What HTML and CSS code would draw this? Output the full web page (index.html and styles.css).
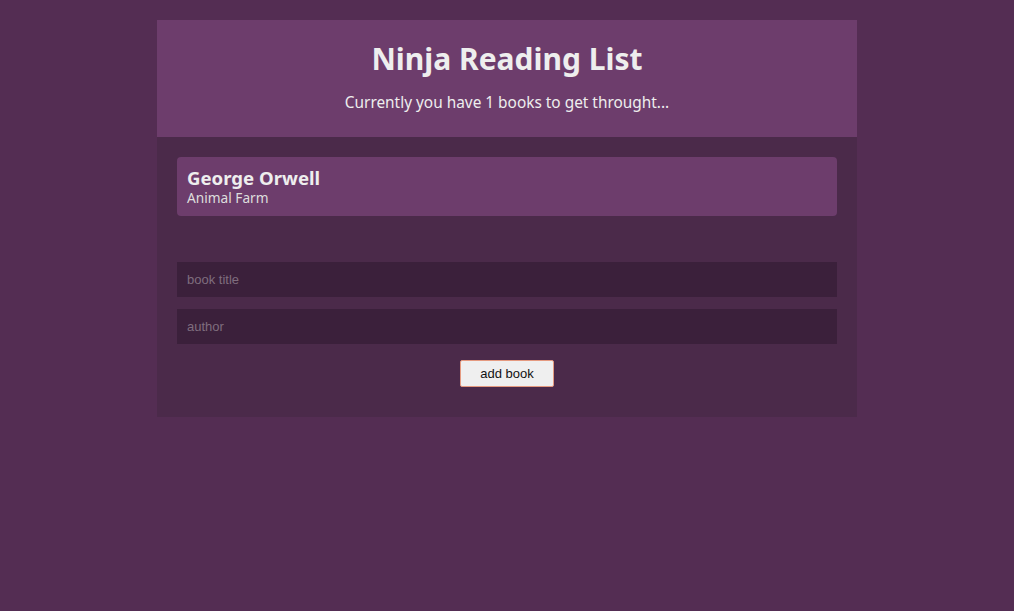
FILE: index.html
```html
<!DOCTYPE html>
<html>
<head>
<meta charset="utf-8">
<link rel="stylesheet" href="styles.css">
</head>
<body>
<div class="app">
  <header class="navbar">
    <h1>Ninja Reading List</h1>
    <p>Currently you have 1 books to get throught...</p>
  </header>
  <main class="content">
    <ul class="book-list">
      <li class="book">
        <div class="title">George Orwell</div>
        <div class="author">Animal Farm</div>
      </li>
    </ul>
    <form class="book-form">
      <input type="text" placeholder="book title">
      <input type="text" placeholder="author">
      <button type="button">add book</button>
    </form>
  </main>
</div>
</body>
</html>
```
FILE: styles.css
```css
html, body {
  margin: 0;
  padding: 0;
  background: #542d53;
}
body {
  font-family: "Noto Sans", "Open Sans", sans-serif;
  color: #eee;
}
.app {
  width: 700px;
  margin: 20px auto;
}
.navbar {
  background: #6d3d6c;
  height: 117px;
  box-sizing: border-box;
  padding-top: 20px;
  text-align: center;
}
.navbar h1 {
  margin: 0;
  font-size: 30px;
  line-height: 38px;
  font-weight: 700;
}
.navbar p {
  margin: 15px 0 0;
  font-size: 15.4px;
  line-height: 20px;
}
.content {
  background: #4b2a4a;
  padding: 20px 20px 30px;
}
.book-list {
  list-style: none;
  margin: 0 0 46px;
  padding: 0;
}
.book {
  background: #6d3d6c;
  border-radius: 4px;
  padding: 10px 10px;
  height: 59px;
  box-sizing: border-box;
}
.book .title {
  font-weight: 700;
  font-size: 18.6px;
  line-height: 22px;
}
.book .author {
  font-size: 13.7px;
  line-height: 17px;
  color: #ddd;
}
.book-form {
  display: flex;
  flex-direction: column;
  align-items: center;
}
.book-form input {
  width: 100%;
  box-sizing: border-box;
  height: 35px;
  background: #3b203b;
  border: 0;
  padding: 0 10px;
  margin: 0 0 12px;
  font-family: "Liberation Sans", Arial, sans-serif;
  font-size: 13px;
  color: #ddd;
  outline: none;
}
.book-form input::placeholder {
  color: #7f6d7e;
}
.book-form button {
  margin-top: 4px;
  width: 94px;
  height: 27px;
  background: #efefef;
  border: 1px solid #e59a80;
  border-radius: 2px;
  font-family: "Liberation Sans", Arial, sans-serif;
  font-size: 13px;
  color: #111;
  padding: 0;
}
```
